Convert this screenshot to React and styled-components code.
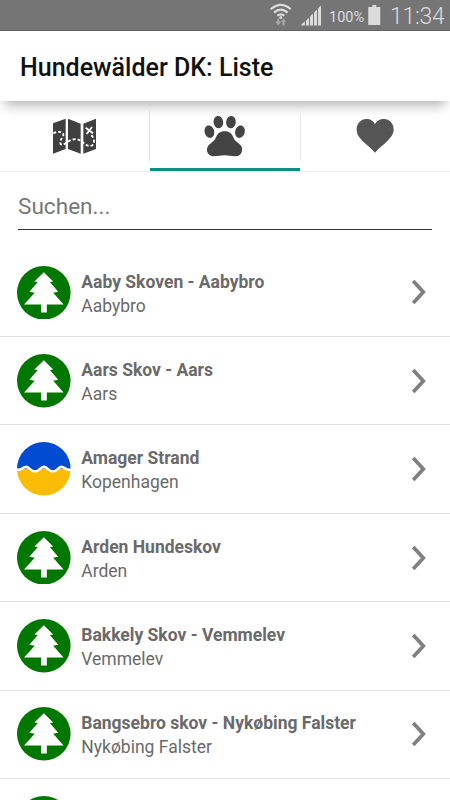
import React from "react";
import styled, { createGlobalStyle } from "styled-components";

const places = [
  { id: 1, name: "Aaby Skoven - Aabybro", city: "Aabybro", type: "forest" },
  { id: 2, name: "Aars Skov - Aars", city: "Aars", type: "forest" },
  { id: 3, name: "Amager Strand", city: "Kopenhagen", type: "beach" },
  { id: 4, name: "Arden Hundeskov", city: "Arden", type: "forest" },
  { id: 5, name: "Bakkely Skov - Vemmelev", city: "Vemmelev", type: "forest" },
  { id: 6, name: "Bangsebro skov - Nykøbing Falster", city: "Nykøbing Falster", type: "forest" },
  { id: 7, type: "forest" },
];

function StatusIcons() {
  return (
    <svg width="60" height="30" viewBox="265 0 60 30" fill="none">
      <g stroke="#dcdcdc" strokeWidth="2.1">
        <path d="M270.8 9.2q10-8.6 20 0" />
        <path d="M274 12.6q6.8-5.8 13.6 0" />
        <path d="M277.2 15.8q3.6-3 7.2 0" />
      </g>
      <circle cx="280.8" cy="17.4" r="1.5" fill="#dcdcdc" />
      <g fill="#a8a8a8">
        <path d="M276.5 21.5h1.4v-3h2v3h1.4v.8l-2.4 3.2-2.4-3.2z" transform="translate(-.6 0)" />
        <path d="M281 21.8l2.6-3.4 2.5 3.4h-1.5v3.8h-2v-3.8z" />
      </g>
      <g fill="#dcdcdc">
        <path d="M301.5 25.5v-1.2l3.4-3v4.2z" />
        <path d="M306 25.5v-5l3-2.8v7.8z" />
        <path d="M310 25.5v-9l3-3v12z" />
        <path d="M314 25.5v-13l3-3v16z" />
        <path d="M318 25.5v-17l3-3v20z" />
      </g>
    </svg>
  );
}

function MapIcon() {
  return (
    <TabIcon viewBox="33 30 144 126">
      <g fill="#404040">
        <path d="M39 55L77 41V132L39 146z" />
        <path d="M84 41L122 56V146L84 132z" />
        <path d="M130 56L168 41V132L130 146z" />
      </g>
      <g fill="none" stroke="#fff" strokeWidth="5.5">
        <path
          d="M40 85C56 76 76 82 69 94C62 104 58 113 63 118C72 124 83 107 96 104C116 98 125 109 133 116C143 126 160 126 162 112C163 103 158 94 152 88"
          strokeDasharray="9 6"
        />
        <path d="M137 68L159 85M156 66L140 87" />
      </g>
    </TabIcon>
  );
}

function PawIcon() {
  return (
    <TabIcon viewBox="33 30 144 126" fill="#444">
      <ellipse cx="58" cy="80" rx="14.5" ry="19" transform="rotate(-14 58 80)" />
      <ellipse cx="85" cy="51.5" rx="14.5" ry="18.5" transform="rotate(-8 85 51)" />
      <ellipse cx="123" cy="51.5" rx="14.5" ry="18.5" transform="rotate(8 123 51)" />
      <ellipse cx="150" cy="80" rx="14.5" ry="19" transform="rotate(14 150 80)" />
      <path d="M104 79C119 79 125 86 130 97C134 107 140 111 147 116C155 122 158 129 156 138C153 149 147 154 136 154C124 154 116 151 104 151C92 151 84 154 72 154C61 154 54 149 51 138C50 129 53 122 61 116C68 111 74 107 78 97C83 86 89 79 104 79z" />
    </TabIcon>
  );
}

function HeartIcon() {
  return (
    <TabIcon viewBox="33 30 144 126" fill="#555">
      <path d="M105 143C94 128 81 121 67 107C54 94 50 86 50 73C50 55 63 42 79 42C91 42 101 48 105 58C109 48 120 42 132 42C148 42 161 55 161 73C161 86 156 94 143 107C129 121 116 128 105 143z" />
    </TabIcon>
  );
}

function PlaceIcon({ type }) {
  if (type === "beach") {
    return (
      <Badge viewBox="51 52 160 160">
        <path d="M51 132a80 80 0 0 1 160 0z" fill="#004bd1" />
        <path d="M51 132a80 80 0 0 0 160 0z" fill="#fabc05" />
        <path
          d="M54 132C66 136 69 125 78 125C88 125 91 140 105 140C119 140 120 125 131 125C142 125 144 140 158 140C172 140 174 125 184 125C193 125 196 136 208 132L208 122H54z"
          fill="#004bd1"
        />
        <path
          d="M51 135C66 137 69 126 78 126C88 126 91 140 105 140C119 140 120 126 131 126C142 126 144 140 158 140C172 140 174 126 184 126C193 126 196 137 211 135"
          fill="none"
          stroke="#fff"
          strokeWidth="7.5"
        />
      </Badge>
    );
  }
  return (
    <Badge viewBox="51 32 160 160">
      <circle cx="131" cy="112" r="80" fill="#007800" />
      <path
        d="M131 51L159 78L149 80L174 109L159 112L190 147H140V171H123V147H72L104 112L88 109L113 80L103 78z"
        fill="#fff"
      />
    </Badge>
  );
}

function App() {
  return (
    <Screen>
      <GlobalStyle />
      <StatusBar>
        <StatusIcons />
        <Percent>100%</Percent>
        <Battery viewBox="0 0 12 20">
          <path d="M4 0h4v2h4v18H0V2h4z" />
        </Battery>
        <Clock>11:34</Clock>
      </StatusBar>
      <Header>
        <Title>Hundewälder DK: Liste</Title>
      </Header>
      <Tabs>
        <Tab><MapIcon /></Tab>
        <Divider $color="#dedede" />
        <Tab $active><PawIcon /></Tab>
        <Divider $color="#ececec" />
        <Tab><HeartIcon /></Tab>
      </Tabs>
      <Search>
        <SearchInput placeholder="Suchen..." />
      </Search>
      <List>
        {places.map((place) => (
          <Row key={place.id}>
            <PlaceIcon type={place.type} />
            {place.name && (
              <>
                <Info>
                  <Name>{place.name}</Name>
                  <City>{place.city}</City>
                </Info>
                <Chevron viewBox="0 0 16 28">
                  <path d="M2.2 3L12.3 14L2.2 25" fill="none" stroke="#7f7f7f" strokeWidth="3.7" />
                </Chevron>
              </>
            )}
          </Row>
        ))}
      </List>
    </Screen>
  );
}

const GlobalStyle = createGlobalStyle`
  body {
    margin: 0;
    overflow: hidden;
  }
  * {
    box-sizing: border-box;
  }
`;

const Screen = styled.div`
  display: flex;
  flex-direction: column;
  width: 450px;
  height: 800px;
  overflow: hidden;
  background: #fff;
  font-family: Roboto, "Liberation Sans", sans-serif;
`;

const StatusBar = styled.div`
  display: flex;
  flex: none;
  align-items: center;
  justify-content: flex-end;
  height: 31px;
  padding-right: 6px;
  background: #757575;
  border-bottom: 1px solid #626262;
`;

const Percent = styled.span`
  width: 35px;
  margin: 5px 4px 0;
  color: #dcdcdc;
  font-size: 14.5px;
  line-height: 20px;
  white-space: nowrap;
`;

const Battery = styled.svg`
  width: 12.5px;
  height: 20px;
  fill: #dcdcdc;
`;

const Clock = styled.span`
  width: 54px;
  margin: 4px 0 0 9.5px;
  color: #dcdcdc;
  font-size: 23px;
  font-weight: 300;
  letter-spacing: -0.3px;
  line-height: 26px;
`;

const Header = styled.header`
  display: flex;
  flex: none;
  align-items: center;
  height: 70px;
  padding: 3px 20px 0;
  background: #fff;
  box-shadow: 0 9px 12px -5px rgba(0, 0, 0, 0.32);
`;

const Title = styled.h1`
  margin: 0;
  color: #111;
  font-size: 25px;
  font-weight: 500;
  line-height: 30px;
  white-space: nowrap;
`;

const Tabs = styled.nav`
  display: flex;
  flex: none;
  align-items: center;
  height: 71px;
  border-bottom: 1px solid #eee;
`;

const Tab = styled.div`
  display: flex;
  flex: 1;
  align-items: center;
  justify-content: center;
  height: 70px;
  padding-top: ${({ $active }) => ($active ? "3px" : "0")};
  border-bottom: ${({ $active }) => ($active ? "3px solid #0b8f82" : "none")};
`;

const TabIcon = styled.svg`
  width: 48px;
  height: 42px;
`;

const Divider = styled.span`
  width: 1px;
  height: 50px;
  background: ${({ $color }) => $color};
`;

const Search = styled.div`
  flex: none;
  height: 76.8px;
  padding: 10px 18px 0;
`;

const SearchInput = styled.input`
  display: block;
  width: 100%;
  height: 48px;
  padding: 2px 0 0;
  border: 0;
  border-bottom: 1px solid #333;
  outline: none;
  background: none;
  font-family: inherit;
  font-size: 22.6px;
  &::placeholder {
    color: #777;
    opacity: 1;
  }
`;

const List = styled.ul`
  flex: none;
  margin: 0;
  padding: 0;
  list-style: none;
`;

const Row = styled.li`
  display: flex;
  align-items: center;
  height: 88.35px;
  padding: 0 23px 0 17px;
  border-bottom: 1px solid #dfdfdf;
`;

const Badge = styled.svg`
  flex: none;
  width: 53.6px;
  height: 53.6px;
`;

const Info = styled.div`
  flex: 1;
  margin-left: 10.7px;
  padding-top: 2.6px;
  color: #6a6a6a;
  font-size: 17.5px;
  line-height: 24px;
  white-space: nowrap;
`;

const Name = styled.div`
  font-weight: 700;
`;

const City = styled.div`
  font-weight: 400;
`;

const Chevron = styled.svg`
  flex: none;
  width: 16px;
  height: 28px;
`;

export default App;
